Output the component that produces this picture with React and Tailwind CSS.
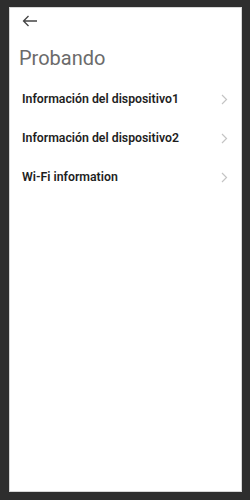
import React from "react";

const items = [
  "Información del dispositivo1",
  "Información del dispositivo2",
  "Wi-Fi information",
];

function Chevron() {
  return (
    <svg width="7" height="11" viewBox="0 0 7 11" fill="none">
      <path d="M1 1l4.5 4.5L1 10" stroke="#c4c4c4" strokeWidth="1.2" />
    </svg>
  );
}

export default function App() {
  return (
    <div className="w-[250px] h-[500px] bg-[#2e2e2e] pt-[7px] pb-[8px] pl-[9px] pr-[8px]">
      <div
        className="h-full bg-white border border-[#d6d6d6] flex flex-col"
        style={{ fontFamily: "Roboto, 'Noto Sans', sans-serif" }}
      >
        <div className="pl-[12px] pt-[6px] h-[20px] flex items-center">
          <svg width="16" height="12" viewBox="0 0 16 12" fill="none">
            <path d="M15 6H1.5M6.5 1L1.5 6l5 5" stroke="#444" strokeWidth="1.3" />
          </svg>
        </div>
        <div className="pl-[9px] mt-[18px] text-[20px] leading-[24px] text-[#6b6b6b]">
          Probando
        </div>
        <div className="mt-[10px] flex flex-col">
          {items.map((t) => (
            <div key={t} className="h-[39px] flex items-center justify-between pl-[12px] pr-[13px]">
              <span className="text-[12.3px] font-semibold text-[#1e1e1e]">{t}</span>
              <Chevron />
            </div>
          ))}
        </div>
      </div>
    </div>
  );
}
